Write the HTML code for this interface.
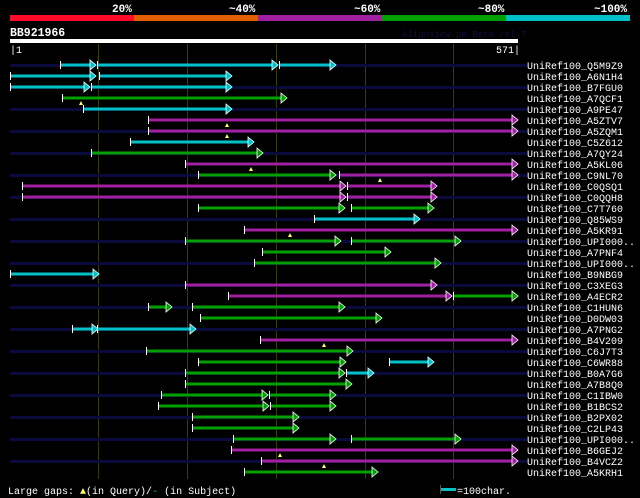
<!DOCTYPE html>
<html><head><meta charset="utf-8"><style>
html,body{margin:0;padding:0;background:#000;}
svg{display:block}
text{font-family:"Liberation Mono",monospace;}
.c{fill:#00c0c8}.g{fill:#00a000}.m{fill:#a020a0}
polygon{stroke:#fff;stroke-width:0.8}
.t{fill:#fff}.d{fill:#0a0a3c}.y{fill:#ffff60;stroke:none}
</style></head><body>
<svg width="640" height="498" xmlns="http://www.w3.org/2000/svg">
<rect width="640" height="498" fill="#000"/>
<g font-size="11" font-weight="bold" fill="#fff">
<text x="112" y="12">20%</text><text x="229" y="12">~40%</text><text x="354" y="12">~60%</text><text x="478" y="12">~80%</text><text x="594" y="12">~100%</text>
</g>
<rect x="10" y="15" width="124" height="6" fill="#ff0a28"/>
<rect x="134" y="15" width="124" height="6" fill="#e06000"/>
<rect x="258" y="15" width="124" height="6" fill="#a020a0"/>
<rect x="382" y="15" width="124" height="6" fill="#00a000"/>
<rect x="506" y="15" width="124" height="6" fill="#00c0c8"/>
<text x="10" y="36" font-size="11.5" font-weight="bold" fill="#fff">BB921966</text>
<text x="402" y="37" font-size="9" fill="#101040">AlignView.pm Beta rel.7</text>
<rect x="10" y="39" width="508" height="4" fill="#fff"/>
<text x="10" y="53" font-size="10" fill="#fff">|1</text>
<text x="496" y="53" font-size="10" fill="#fff">571|</text>
<g stroke="#3a3a10" stroke-width="1">
<line x1="98.5" y1="44" x2="98.5" y2="479"/><line x1="187.5" y1="44" x2="187.5" y2="479"/><line x1="276.5" y1="44" x2="276.5" y2="479"/><line x1="365.5" y1="44" x2="365.5" y2="479"/><line x1="453.5" y1="44" x2="453.5" y2="479"/>
</g>

<g transform="translate(0,65)"><rect class="d" x="10" y="-1" width="517" height="3"/>
<rect class="c" x="60" y="-1.5" width="35" height="3"/><rect class="t" x="60" y="-4" width="1" height="8"/><polygon class="c" points="90,-5 96,0 90,5"/>
<rect class="c" x="97" y="-1.5" width="180" height="3"/><rect class="t" x="97" y="-4" width="1" height="8"/><polygon class="c" points="272,-5 278,0 272,5"/>
<rect class="c" x="279" y="-1.5" width="56" height="3"/><rect class="t" x="279" y="-4" width="1" height="8"/><polygon class="c" points="330,-5 336,0 330,5"/></g>

<g transform="translate(0,76)">
<rect class="c" x="10" y="-1.5" width="85" height="3"/><rect class="t" x="10" y="-4" width="1" height="8"/><polygon class="c" points="90,-5 96,0 90,5"/>
<rect class="c" x="99" y="-1.5" width="132" height="3"/><rect class="t" x="99" y="-4" width="1" height="8"/><polygon class="c" points="226,-5 232,0 226,5"/></g>

<g transform="translate(0,87)"><rect class="d" x="10" y="-1" width="517" height="3"/>
<rect class="c" x="10" y="-1.5" width="79" height="3"/><rect class="t" x="10" y="-4" width="1" height="8"/><polygon class="c" points="84,-5 90,0 84,5"/>
<rect class="c" x="91" y="-1.5" width="140" height="3"/><rect class="t" x="91" y="-4" width="1" height="8"/><polygon class="c" points="226,-5 232,0 226,5"/></g>

<g transform="translate(0,98)">
<rect class="g" x="62" y="-1.5" width="224" height="3"/><rect class="t" x="62" y="-4" width="1" height="8"/><polygon class="g" points="281,-5 287,0 281,5"/>
<polygon class="y" points="81,3 79,7 83,7"/></g>

<g transform="translate(0,109)"><rect class="d" x="10" y="-1" width="517" height="3"/>
<rect class="c" x="83" y="-1.5" width="148" height="3"/><rect class="t" x="83" y="-4" width="1" height="8"/><polygon class="c" points="226,-5 232,0 226,5"/></g>

<g transform="translate(0,120)">
<rect class="m" x="148" y="-1.5" width="369" height="3"/><rect class="t" x="148" y="-4" width="1" height="8"/><polygon class="m" points="512,-5 518,0 512,5"/>
<polygon class="y" points="227,3 225,7 229,7"/></g>

<g transform="translate(0,131)"><rect class="d" x="10" y="-1" width="517" height="3"/>
<rect class="m" x="148" y="-1.5" width="369" height="3"/><rect class="t" x="148" y="-4" width="1" height="8"/><polygon class="m" points="512,-5 518,0 512,5"/>
<polygon class="y" points="227,3 225,7 229,7"/></g>

<g transform="translate(0,142)">
<rect class="c" x="130" y="-1.5" width="123" height="3"/><rect class="t" x="130" y="-4" width="1" height="8"/><polygon class="c" points="248,-5 254,0 248,5"/></g>

<g transform="translate(0,153)"><rect class="d" x="10" y="-1" width="517" height="3"/>
<rect class="g" x="91" y="-1.5" width="171" height="3"/><rect class="t" x="91" y="-4" width="1" height="8"/><polygon class="g" points="257,-5 263,0 257,5"/></g>

<g transform="translate(0,164)">
<rect class="m" x="185" y="-1.5" width="332" height="3"/><rect class="t" x="185" y="-4" width="1" height="8"/><polygon class="m" points="512,-5 518,0 512,5"/>
<polygon class="y" points="251,3 249,7 253,7"/></g>

<g transform="translate(0,175)"><rect class="d" x="10" y="-1" width="517" height="3"/>
<rect class="g" x="198" y="-1.5" width="137" height="3"/><rect class="t" x="198" y="-4" width="1" height="8"/><polygon class="g" points="330,-5 336,0 330,5"/>
<rect class="m" x="339" y="-1.5" width="178" height="3"/><rect class="t" x="339" y="-4" width="1" height="8"/><polygon class="m" points="512,-5 518,0 512,5"/>
<polygon class="y" points="380,3 378,7 382,7"/></g>

<g transform="translate(0,186)">
<rect class="m" x="22" y="-1.5" width="323" height="3"/><rect class="t" x="22" y="-4" width="1" height="8"/><polygon class="m" points="340,-5 346,0 340,5"/>
<rect class="m" x="347" y="-1.5" width="89" height="3"/><rect class="t" x="347" y="-4" width="1" height="8"/><polygon class="m" points="431,-5 437,0 431,5"/></g>

<g transform="translate(0,197)"><rect class="d" x="10" y="-1" width="517" height="3"/>
<rect class="m" x="22" y="-1.5" width="323" height="3"/><rect class="t" x="22" y="-4" width="1" height="8"/><polygon class="m" points="340,-5 346,0 340,5"/>
<rect class="m" x="347" y="-1.5" width="89" height="3"/><rect class="t" x="347" y="-4" width="1" height="8"/><polygon class="m" points="431,-5 437,0 431,5"/></g>

<g transform="translate(0,208)">
<rect class="g" x="198" y="-1.5" width="146" height="3"/><rect class="t" x="198" y="-4" width="1" height="8"/><polygon class="g" points="339,-5 345,0 339,5"/>
<rect class="g" x="351" y="-1.5" width="82" height="3"/><rect class="t" x="351" y="-4" width="1" height="8"/><polygon class="g" points="428,-5 434,0 428,5"/></g>

<g transform="translate(0,219)"><rect class="d" x="10" y="-1" width="517" height="3"/>
<rect class="c" x="314" y="-1.5" width="105" height="3"/><rect class="t" x="314" y="-4" width="1" height="8"/><polygon class="c" points="414,-5 420,0 414,5"/></g>

<g transform="translate(0,230)">
<rect class="m" x="244" y="-1.5" width="273" height="3"/><rect class="t" x="244" y="-4" width="1" height="8"/><polygon class="m" points="512,-5 518,0 512,5"/>
<polygon class="y" points="290,3 288,7 292,7"/></g>

<g transform="translate(0,241)"><rect class="d" x="10" y="-1" width="517" height="3"/>
<rect class="g" x="185" y="-1.5" width="155" height="3"/><rect class="t" x="185" y="-4" width="1" height="8"/><polygon class="g" points="335,-5 341,0 335,5"/>
<rect class="g" x="351" y="-1.5" width="109" height="3"/><rect class="t" x="351" y="-4" width="1" height="8"/><polygon class="g" points="455,-5 461,0 455,5"/></g>

<g transform="translate(0,252)">
<rect class="g" x="262" y="-1.5" width="128" height="3"/><rect class="t" x="262" y="-4" width="1" height="8"/><polygon class="g" points="385,-5 391,0 385,5"/></g>

<g transform="translate(0,263)"><rect class="d" x="10" y="-1" width="517" height="3"/>
<rect class="g" x="254" y="-1.5" width="186" height="3"/><rect class="t" x="254" y="-4" width="1" height="8"/><polygon class="g" points="435,-5 441,0 435,5"/></g>

<g transform="translate(0,274)">
<rect class="c" x="10" y="-1.5" width="88" height="3"/><rect class="t" x="10" y="-4" width="1" height="8"/><polygon class="c" points="93,-5 99,0 93,5"/></g>

<g transform="translate(0,285)"><rect class="d" x="10" y="-1" width="517" height="3"/>
<rect class="m" x="185" y="-1.5" width="251" height="3"/><rect class="t" x="185" y="-4" width="1" height="8"/><polygon class="m" points="431,-5 437,0 431,5"/></g>

<g transform="translate(0,296)">
<rect class="m" x="228" y="-1.5" width="223" height="3"/><rect class="t" x="228" y="-4" width="1" height="8"/><polygon class="m" points="446,-5 452,0 446,5"/>
<rect class="g" x="453" y="-1.5" width="64" height="3"/><rect class="t" x="453" y="-4" width="1" height="8"/><polygon class="g" points="512,-5 518,0 512,5"/></g>

<g transform="translate(0,307)"><rect class="d" x="10" y="-1" width="517" height="3"/>
<rect class="g" x="148" y="-1.5" width="23" height="3"/><rect class="t" x="148" y="-4" width="1" height="8"/><polygon class="g" points="166,-5 172,0 166,5"/>
<rect class="g" x="192" y="-1.5" width="152" height="3"/><rect class="t" x="192" y="-4" width="1" height="8"/><polygon class="g" points="339,-5 345,0 339,5"/></g>

<g transform="translate(0,318)">
<rect class="g" x="200" y="-1.5" width="181" height="3"/><rect class="t" x="200" y="-4" width="1" height="8"/><polygon class="g" points="376,-5 382,0 376,5"/></g>

<g transform="translate(0,329)"><rect class="d" x="10" y="-1" width="517" height="3"/>
<rect class="c" x="72" y="-1.5" width="25" height="3"/><rect class="t" x="72" y="-4" width="1" height="8"/><polygon class="c" points="92,-5 98,0 92,5"/>
<rect class="c" x="97" y="-1.5" width="98" height="3"/><rect class="t" x="97" y="-4" width="1" height="8"/><polygon class="c" points="190,-5 196,0 190,5"/></g>

<g transform="translate(0,340)">
<rect class="m" x="260" y="-1.5" width="257" height="3"/><rect class="t" x="260" y="-4" width="1" height="8"/><polygon class="m" points="512,-5 518,0 512,5"/>
<polygon class="y" points="324,3 322,7 326,7"/></g>

<g transform="translate(0,351)"><rect class="d" x="10" y="-1" width="517" height="3"/>
<rect class="g" x="146" y="-1.5" width="206" height="3"/><rect class="t" x="146" y="-4" width="1" height="8"/><polygon class="g" points="347,-5 353,0 347,5"/></g>

<g transform="translate(0,362)">
<rect class="g" x="198" y="-1.5" width="147" height="3"/><rect class="t" x="198" y="-4" width="1" height="8"/><polygon class="g" points="340,-5 346,0 340,5"/>
<rect class="c" x="389" y="-1.5" width="44" height="3"/><rect class="t" x="389" y="-4" width="1" height="8"/><polygon class="c" points="428,-5 434,0 428,5"/></g>

<g transform="translate(0,373)"><rect class="d" x="10" y="-1" width="517" height="3"/>
<rect class="g" x="185" y="-1.5" width="159" height="3"/><rect class="t" x="185" y="-4" width="1" height="8"/><polygon class="g" points="339,-5 345,0 339,5"/>
<rect class="c" x="346" y="-1.5" width="27" height="3"/><rect class="t" x="346" y="-4" width="1" height="8"/><polygon class="c" points="368,-5 374,0 368,5"/></g>

<g transform="translate(0,384)">
<rect class="g" x="185" y="-1.5" width="166" height="3"/><rect class="t" x="185" y="-4" width="1" height="8"/><polygon class="g" points="346,-5 352,0 346,5"/></g>

<g transform="translate(0,395)"><rect class="d" x="10" y="-1" width="517" height="3"/>
<rect class="g" x="161" y="-1.5" width="106" height="3"/><rect class="t" x="161" y="-4" width="1" height="8"/><polygon class="g" points="262,-5 268,0 262,5"/>
<rect class="g" x="269" y="-1.5" width="66" height="3"/><rect class="t" x="269" y="-4" width="1" height="8"/><polygon class="g" points="330,-5 336,0 330,5"/></g>

<g transform="translate(0,406)">
<rect class="g" x="158" y="-1.5" width="110" height="3"/><rect class="t" x="158" y="-4" width="1" height="8"/><polygon class="g" points="263,-5 269,0 263,5"/>
<rect class="g" x="270" y="-1.5" width="65" height="3"/><rect class="t" x="270" y="-4" width="1" height="8"/><polygon class="g" points="330,-5 336,0 330,5"/></g>

<g transform="translate(0,417)"><rect class="d" x="10" y="-1" width="517" height="3"/>
<rect class="g" x="192" y="-1.5" width="106" height="3"/><rect class="t" x="192" y="-4" width="1" height="8"/><polygon class="g" points="293,-5 299,0 293,5"/></g>

<g transform="translate(0,428)">
<rect class="g" x="192" y="-1.5" width="106" height="3"/><rect class="t" x="192" y="-4" width="1" height="8"/><polygon class="g" points="293,-5 299,0 293,5"/></g>

<g transform="translate(0,439)"><rect class="d" x="10" y="-1" width="517" height="3"/>
<rect class="g" x="233" y="-1.5" width="102" height="3"/><rect class="t" x="233" y="-4" width="1" height="8"/><polygon class="g" points="330,-5 336,0 330,5"/>
<rect class="g" x="351" y="-1.5" width="109" height="3"/><rect class="t" x="351" y="-4" width="1" height="8"/><polygon class="g" points="455,-5 461,0 455,5"/></g>

<g transform="translate(0,450)">
<rect class="m" x="231" y="-1.5" width="286" height="3"/><rect class="t" x="231" y="-4" width="1" height="8"/><polygon class="m" points="512,-5 518,0 512,5"/>
<polygon class="y" points="280,3 278,7 282,7"/></g>

<g transform="translate(0,461)"><rect class="d" x="10" y="-1" width="517" height="3"/>
<rect class="m" x="261" y="-1.5" width="256" height="3"/><rect class="t" x="261" y="-4" width="1" height="8"/><polygon class="m" points="512,-5 518,0 512,5"/>
<polygon class="y" points="324,3 322,7 326,7"/></g>

<g transform="translate(0,472)">
<rect class="g" x="244" y="-1.5" width="133" height="3"/><rect class="t" x="244" y="-4" width="1" height="8"/><polygon class="g" points="372,-5 378,0 372,5"/></g>

<g font-size="10" fill="#fff">
<text x="527" y="69">UniRef100_Q5M9Z9</text>
<text x="527" y="80">UniRef100_A6N1H4</text>
<text x="527" y="91">UniRef100_B7FGU0</text>
<text x="527" y="102">UniRef100_A7QCF1</text>
<text x="527" y="113">UniRef100_A9PE47</text>
<text x="527" y="124">UniRef100_A5ZTV7</text>
<text x="527" y="135">UniRef100_A5ZQM1</text>
<text x="527" y="146">UniRef100_C5Z612</text>
<text x="527" y="157">UniRef100_A7QY24</text>
<text x="527" y="168">UniRef100_A5KL06</text>
<text x="527" y="179">UniRef100_C9NL70</text>
<text x="527" y="190">UniRef100_C0QSQ1</text>
<text x="527" y="201">UniRef100_C0QQH8</text>
<text x="527" y="212">UniRef100_C7T760</text>
<text x="527" y="223">UniRef100_Q85WS9</text>
<text x="527" y="234">UniRef100_A5KR91</text>
<text x="527" y="245">UniRef100_UPI000..</text>
<text x="527" y="256">UniRef100_A7PNF4</text>
<text x="527" y="267">UniRef100_UPI000..</text>
<text x="527" y="278">UniRef100_B9NBG9</text>
<text x="527" y="289">UniRef100_C3XEG3</text>
<text x="527" y="300">UniRef100_A4ECR2</text>
<text x="527" y="311">UniRef100_C1HUN6</text>
<text x="527" y="322">UniRef100_D0DW03</text>
<text x="527" y="333">UniRef100_A7PNG2</text>
<text x="527" y="344">UniRef100_B4V209</text>
<text x="527" y="355">UniRef100_C6J7T3</text>
<text x="527" y="366">UniRef100_C6WR88</text>
<text x="527" y="377">UniRef100_B0A7G6</text>
<text x="527" y="388">UniRef100_A7B8Q0</text>
<text x="527" y="399">UniRef100_C1IBW0</text>
<text x="527" y="410">UniRef100_B1BCS2</text>
<text x="527" y="421">UniRef100_B2PX02</text>
<text x="527" y="432">UniRef100_C2LP43</text>
<text x="527" y="443">UniRef100_UPI000..</text>
<text x="527" y="454">UniRef100_B6GEJ2</text>
<text x="527" y="465">UniRef100_B4VCZ2</text>
<text x="527" y="476">UniRef100_A5KRH1</text>
</g>

<text x="8" y="494" font-size="10" fill="#fff">Large gaps: <tspan fill="#ffff60">▲</tspan>(in Query)/<tspan fill="#00c0c8">-</tspan> (in Subject)</text>
<rect x="440" y="488" width="16" height="3" fill="#00c0c8"/>
<line x1="440.5" y1="485" x2="440.5" y2="494" stroke="#555"/>
<text x="457" y="494" font-size="10" fill="#fff">=100char.</text>
</svg>
</body></html>
